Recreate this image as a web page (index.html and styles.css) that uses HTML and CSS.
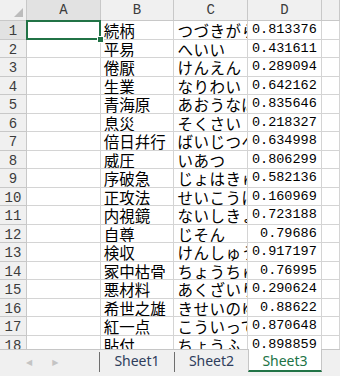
FILE: index.html
```html
<!DOCTYPE html>
<html lang="ja">
<head>
    <meta charset="UTF-8">
    <title>Book1</title>
    <link rel="stylesheet" href="styles.css">
</head>
<body>
    <main class="book">
        <div class="grid">
            <div class="hd corner"></div><div class="hd sel">A</div><div class="hd">B</div><div class="hd">C</div><div class="hd">D</div><div class="hd"></div>

            <div class="hd rh sel">1</div><div class="c active"></div><div class="c">続柄</div><div class="c kana">つづきがら</div><div class="c n">0.813376</div><div class="c"></div>
            <div class="hd rh">2</div><div class="c"></div><div class="c">平易</div><div class="c kana">へいい</div><div class="c n">0.431611</div><div class="c"></div>
            <div class="hd rh">3</div><div class="c"></div><div class="c">倦厭</div><div class="c kana">けんえん</div><div class="c n">0.289094</div><div class="c"></div>
            <div class="hd rh">4</div><div class="c"></div><div class="c">生業</div><div class="c kana">なりわい</div><div class="c n">0.642162</div><div class="c"></div>
            <div class="hd rh">5</div><div class="c"></div><div class="c">青海原</div><div class="c kana">あおうなばら</div><div class="c n">0.835646</div><div class="c"></div>
            <div class="hd rh">6</div><div class="c"></div><div class="c">息災</div><div class="c kana">そくさい</div><div class="c n">0.218327</div><div class="c"></div>
            <div class="hd rh">7</div><div class="c"></div><div class="c">倍日幷行</div><div class="c kana">ばいじつへいこう</div><div class="c n">0.634998</div><div class="c"></div>
            <div class="hd rh">8</div><div class="c"></div><div class="c">威圧</div><div class="c kana">いあつ</div><div class="c n">0.806299</div><div class="c"></div>
            <div class="hd rh">9</div><div class="c"></div><div class="c">序破急</div><div class="c kana">じょはきゅう</div><div class="c n">0.582136</div><div class="c"></div>
            <div class="hd rh">10</div><div class="c"></div><div class="c">正攻法</div><div class="c kana">せいこうほう</div><div class="c n">0.160969</div><div class="c"></div>
            <div class="hd rh">11</div><div class="c"></div><div class="c">内視鏡</div><div class="c kana">ないしきょう</div><div class="c n">0.723188</div><div class="c"></div>
            <div class="hd rh">12</div><div class="c"></div><div class="c">自尊</div><div class="c kana">じそん</div><div class="c n">0.79686</div><div class="c"></div>
            <div class="hd rh">13</div><div class="c"></div><div class="c">検収</div><div class="c kana">けんしゅう</div><div class="c n">0.917197</div><div class="c"></div>
            <div class="hd rh">14</div><div class="c"></div><div class="c">冢中枯骨</div><div class="c kana">ちょうちゅうここつ</div><div class="c n">0.76995</div><div class="c"></div>
            <div class="hd rh">15</div><div class="c"></div><div class="c">悪材料</div><div class="c kana">あくざいりょう</div><div class="c n">0.290624</div><div class="c"></div>
            <div class="hd rh">16</div><div class="c"></div><div class="c">希世之雄</div><div class="c kana">きせいのゆう</div><div class="c n">0.88622</div><div class="c"></div>
            <div class="hd rh">17</div><div class="c"></div><div class="c">紅一点</div><div class="c kana">こういってん</div><div class="c n">0.870648</div><div class="c"></div>
            <div class="hd rh">18</div><div class="c"></div><div class="c">貼付</div><div class="c kana">ちょうふ</div><div class="c n">0.898859</div><div class="c"></div>
        </div>

        <div class="tabbar">
            <div class="nav">
                <span class="arrow">&#9664;</span>
                <span class="arrow">&#9654;</span>
            </div>
            <div class="tab">Sheet1</div>
            <div class="tab">Sheet2</div>
            <div class="tab current">Sheet3</div>
        </div>
    </main>
</body>
</html>
```

FILE: styles.css
```css
body {
    margin: 0;
    width: 340px;
    height: 376px;
    overflow: hidden;
    background: #fff;
    font-family: "Noto Sans CJK JP", sans-serif;
}
.book {
    display: flex;
    flex-direction: column;
    height: 376px;
}

/* cells */
.grid {
    height: 349px;
    overflow: hidden;
    display: grid;
    grid-template-columns: 27px repeat(4, 73.7px) 1fr;
    grid-template-rows: 21px;
    grid-auto-rows: 18.5px;
}
.grid > div {
    box-sizing: border-box;
    border-right: 1px solid #d4d4d4;
    border-bottom: 1px solid #d4d4d4;
    overflow: hidden;
    white-space: nowrap;
}
.grid > .hd {
    background: #f0f0f0;
    border-color: #c8c8c8;
    color: #3c3c3c;
    font-family: "Liberation Mono", monospace;
    font-size: 14px;
    text-align: center;
    line-height: 21px;
}
.grid > .rh {
    line-height: 19px;
    padding-top: 1px;
}
.grid > .sel {
    background: #e2e2e2;
}
.corner {
    position: relative;
}
.corner::after {
    content: "";
    position: absolute;
    right: 3px;
    bottom: 3px;
    border-left: 9px solid transparent;
    border-bottom: 9px solid #bcbcbc;
}
.c {
    font-size: 15.5px;
    line-height: 18px;
    padding-left: 3px;
    color: #000;
}
.kana {
    letter-spacing: 0.5px;
}
.n {
    text-align: right;
    padding-right: 4px;
    font-family: "Liberation Mono", monospace;
    font-size: 13.5px;
}
.grid > .active {
    position: relative;
    overflow: visible;
}
.active::before {
    content: "";
    position: absolute;
    left: -1px;
    top: -1px;
    right: -1px;
    bottom: -1px;
    border: 2px solid #217346;
}
.active::after {
    content: "";
    position: absolute;
    right: -4px;
    bottom: -4px;
    width: 5px;
    height: 5px;
    background: #217346;
    border: 1px solid #fff;
}

/* sheet tabs */
.tabbar {
    height: 27px;
    box-sizing: border-box;
    border-top: 1px solid #c6c6c6;
    background: #f0f0f0;
    display: flex;
    align-items: flex-start;
}
.nav {
    width: 100px;
    height: 20px;
    margin-top: 2px;
    box-sizing: border-box;
    border-right: 1px solid #6e6e6e;
    display: flex;
    align-items: center;
    gap: 20px;
    padding-left: 26px;
}
.arrow {
    color: #c4c4c4;
    font-size: 8px;
    font-family: "DejaVu Sans", sans-serif;
}
.tab {
    width: 74px;
    height: 20px;
    margin-top: 2px;
    box-sizing: border-box;
    text-align: center;
    font-family: "Noto Sans", sans-serif;
    font-size: 14px;
    line-height: 18px;
    color: #2f3e5c;
}
.tab + .tab {
    border-left: 1px solid #6e6e6e;
}
.tab.current {
    height: 23px;
    margin-top: -1px;
    padding-top: 3px;
    background: #fff;
    border-left: 1px solid #c6c6c6;
    border-right: 1px solid #c6c6c6;
    border-bottom: 2px solid #217346;
    color: #217346;
}
```
